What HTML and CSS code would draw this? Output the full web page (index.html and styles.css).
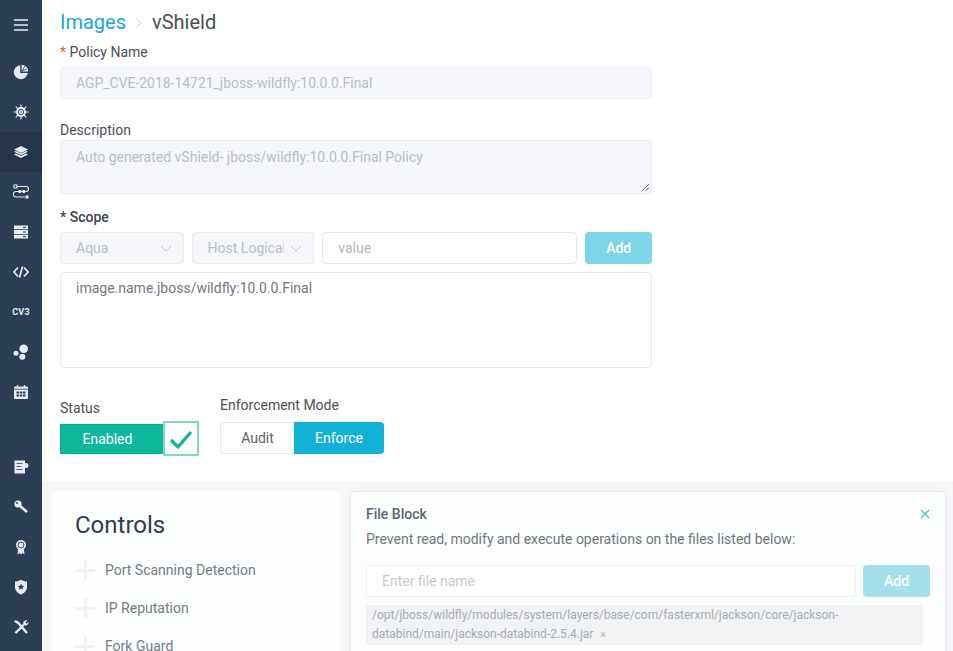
FILE: index.html
```html
<!DOCTYPE html>
<html lang="en">
<head>
<meta charset="utf-8">
<title>vShield</title>
<link rel="stylesheet" href="styles.css">
</head>
<body>
<div class="app">
  <nav class="sidebar">
    <div class="nav-item nav-menu"><svg viewBox="0 0 16 16" class="ico"><path d="M1 3h14M1 8h14M1 13h14" stroke="#e6ebf1" stroke-width="1.600" fill="none"/></svg></div>
    <div class="nav-item"><svg viewBox="0 0 16 16" class="ico"><path d="M7.200 1.200A7 7 0 1 0 14.800 9H7.200z" fill="#e6ebf1"/><path d="M8.600 0.800A6.600 6.600 0 0 1 15.200 7.400H8.600z" fill="#e6ebf1"/><path d="M9 7l3-5M9 7l5-2" stroke="#2c3e55" stroke-width=".8"/></svg></div>
    <div class="nav-item"><svg viewBox="0 0 16 16" class="ico"><path d="M8 .5v3M8 12.500v3M.5 8h3M12.500 8h3M2.700 2.700l2.200 2.200M11.100 11.100l2.200 2.200M2.700 13.300l2.200-2.200M11.100 4.900l2.200-2.200" stroke="#e6ebf1" stroke-width="1.200"/><circle cx="8" cy="8" r="5" fill="#e6ebf1"/><circle cx="8" cy="8" r="2.700" fill="none" stroke="#2c3e55" stroke-width=".9"/><circle cx="8" cy="8" r="1.200" fill="#8e9aa9"/></svg></div>
    <div class="nav-item active"><svg viewBox="0 0 16 16" class="ico"><path d="M8 2l7 3.500-7 3.500-7-3.500z" fill="#e6ebf1"/><path d="M1 7.800l2-.9 5 2.500 5-2.500 2 .9-7 3.500z" fill="#e6ebf1"/><path d="M1 10.500l2-.9 5 2.500 5-2.500 2 .9-7 3.500z" fill="#e6ebf1"/></svg></div>
    <div class="nav-item"><svg viewBox="0 0 16 16" class="ico"><path d="M3.500 2.500h9.500a2 2 0 0 1 0 5H3a2.500 2.500 0 0 0 0 5.500h9" stroke="#e6ebf1" stroke-width="1.200" fill="none"/><rect x="1" y="1" width="3" height="3" fill="none" stroke="#e6ebf1" stroke-width="1"/><rect x="5.500" y="6" width="2.500" height="3" fill="#e6ebf1"/><rect x="9.500" y="6" width="2.500" height="3" fill="#e6ebf1"/><rect x="12.500" y="11.500" width="3" height="3" fill="#e6ebf1"/></svg></div>
    <div class="nav-item"><svg viewBox="0 0 16 16" class="ico"><path d="M1 1.500h14v3.800H1zM1 6.100h14v3.800H1zM1 10.700h14v3.800H1z" fill="#e6ebf1"/><path d="M10 3.400h3M10 8h3M10 12.600h3" stroke="#2c3e55" stroke-width="1"/></svg></div>
    <div class="nav-item"><svg viewBox="0 0 16 16" class="ico"><path d="M5 3.500L1 8l4 4.500M11 3.500L15 8l-4 4.500M9.500 2.500l-3 11" stroke="#e6ebf1" stroke-width="1.700" fill="none"/></svg></div>
    <div class="nav-item"><span class="cv-label">CV3</span></div>
    <div class="nav-item"><svg viewBox="0 0 16 16" class="ico"><circle cx="10.700" cy="4.800" r="4.300" fill="#e6ebf1"/><circle cx="3" cy="9.200" r="2.500" fill="#e6ebf1"/><circle cx="9.300" cy="12.700" r="3" fill="#e6ebf1"/></svg></div>
    <div class="nav-item nav-last-top"><svg viewBox="0 0 16 16" class="ico"><rect x="1" y="2.500" width="14" height="12.500" rx="1" fill="#e6ebf1"/><path d="M4.500 1v3M11.500 1v3" stroke="#e6ebf1" stroke-width="1.200"/><path d="M1 5.200h14" stroke="#2c3e55" stroke-width=".8"/><path d="M3.500 7.500h2.500v2H3.500zM6.800 7.500h2.500v2H6.800zM10 7.500h2.500v2H10zM3.500 10.500h2.500v2H3.500zM6.800 10.500h2.500v2H6.800zM10 10.500h2.500v2H10z" fill="#2c3e55"/></svg></div>
    <div class="nav-item"><svg viewBox="0 0 16 16" class="ico"><path d="M1.500 1.500h10.500v13H1.500z" fill="#e6ebf1"/><path d="M3.500 4.500h6M3.500 7.500h5M3.500 10.500h6" stroke="#2c3e55" stroke-width=".8"/><circle cx="12.800" cy="6.500" r="2.600" fill="#e6ebf1"/></svg></div>
    <div class="nav-item"><svg viewBox="0 0 16 16" class="ico"><circle cx="5" cy="5" r="3.600" fill="#e6ebf1"/><circle cx="4" cy="4" r="1" fill="#2c3e55"/><path d="M6.500 6.500l7.500 6.500" stroke="#e6ebf1" stroke-width="2.600"/></svg></div>
    <div class="nav-item"><svg viewBox="0 0 16 16" class="ico"><path d="M5.200 9.500L4.500 15.500 6.500 14 8 15.500 9.500 14 11.500 15.500 10.800 9.500z" fill="#e6ebf1"/><circle cx="8" cy="6" r="5" fill="#e6ebf1"/><circle cx="8" cy="6" r="3" fill="none" stroke="#2c3e55" stroke-width=".9"/></svg></div>
    <div class="nav-item"><svg viewBox="0 0 16 16" class="ico"><path d="M2 2.500c2 0 4-.6 6-1.500 2 .9 4 1.500 6 1.500V8c0 3.500-2.500 6-6 7.500C4.500 14 2 11.500 2 8z" fill="#e6ebf1"/><path d="M8 4.500l1 2.200 2.300.2-1.700 1.600.5 2.300-2.100-1.200-2.100 1.200.5-2.300-1.700-1.600 2.300-.2z" fill="#2c3e55"/></svg></div>
    <div class="nav-item"><svg viewBox="0 0 16 16" class="ico"><path d="M2.500 14L11 5.500M4 2.500L14 14" stroke="#e6ebf1" stroke-width="2.400" fill="none"/><path d="M10 4.500c0-2 2-3.700 4.500-3.200L12.500 3.500l1 1.200 2-2c.4 2.500-1.500 4-3.500 3.800z" fill="#e6ebf1"/><path d="M1 2.500L3 1l2 2-1.500 1.500z" fill="#e6ebf1"/></svg></div>
  </nav>

  <main class="main">
    <div class="form">
      <h1 class="crumbs"><span class="crumb-link">Images</span><svg class="crumb-sep" viewBox="0 0 8 12"><path d="M1.500 1.500L6 6l-4.500 4.500" fill="none" stroke="#ced3d9" stroke-width="1"/></svg><span class="crumb-current">vShield</span></h1>

      <div class="label label-policy"><span class="req">*</span> Policy Name</div>
      <div class="field field-name disabled">AGP_CVE-2018-14721_jboss-wildfly:10.0.0.Final</div>

      <div class="label label-desc">Description</div>
      <div class="field field-desc disabled">Auto generated vShield- jboss/wildfly:10.0.0.Final Policy
        <svg class="resize" viewBox="0 0 10 10"><path d="M1 9l8-8M5 9l4-4" stroke="#55585d" stroke-width="1"/></svg>
      </div>

      <div class="label label-scope">* Scope</div>
      <div class="scope-row">
        <div class="select disabled sel-a"><span>Aqua</span><svg class="chev" viewBox="0 0 12 7"><path d="M1 1l5 5 5-5" fill="none" stroke="#c4cad2" stroke-width="1"/></svg></div>
        <div class="select disabled sel-b"><span class="clip">Host Logical</span><svg class="chev" viewBox="0 0 12 7"><path d="M1 1l5 5 5-5" fill="none" stroke="#c4cad2" stroke-width="1"/></svg></div>
        <div class="value-input">value</div>
        <div class="add-btn">Add</div>
      </div>
      <div class="scope-box">image.name.jboss/wildfly:10.0.0.Final</div>

      <div class="status-row">
        <div class="status-col">
          <div class="label label-status">Status</div>
          <div class="switch">
            <div class="switch-on">Enabled</div>
            <div class="switch-check"><svg viewBox="0 0 24 20"><path d="M2 11l7 7L22 3" fill="none" stroke="#12b59b" stroke-width="3.200"/></svg></div>
          </div>
        </div>
        <div class="mode-col">
          <div class="label label-mode">Enforcement Mode</div>
          <div class="segment">
            <div class="seg seg-off">Audit</div>
            <div class="seg seg-on">Enforce</div>
          </div>
        </div>
      </div>
    </div>

    <section class="lower">
      <div class="controls">
        <h2 class="controls-title">Controls</h2>
        <div class="control"><span class="plus"></span>Port Scanning Detection</div>
        <div class="control"><span class="plus"></span>IP Reputation</div>
        <div class="control"><span class="plus"></span>Fork Guard</div>
      </div>
      <div class="panel">
        <div class="panel-head">
          <div class="panel-title">File Block</div>
          <svg class="panel-close" viewBox="0 0 10 10"><path d="M1 1l8 8M9 1l-8 8" stroke="#5cc3dd" stroke-width="1.500"/></svg>
        </div>
        <div class="panel-desc">Prevent read, modify and execute operations on the files listed below:</div>
        <div class="panel-row">
          <div class="file-input">Enter file name</div>
          <div class="file-add">Add</div>
        </div>
        <div class="file-tag">
          <div>/opt/jboss/wildfly/modules/system/layers/base/com/fasterxml/jackson/core/jackson-</div>
          <div class="tag-line">databind/main/jackson-databind-2.5.4.jar<span class="tag-x">×</span></div>
        </div>
      </div>
    </section>
  </main>
</div>
</body>
</html>
```
FILE: styles.css
```css
* { box-sizing: border-box; }
html, body { margin: 0; height: 100%; }
body { font-family: Roboto, "Liberation Sans", sans-serif; color: #4a5360; background: #fff; overflow: hidden; }
.app { display: flex; height: 651px; overflow: hidden; }

.sidebar { width: 42px; flex: none; background: #2c3e55; padding-top: 5px; }
.nav-item { height: 40px; display: flex; align-items: center; justify-content: center; }
.nav-menu { height: 47px; padding-bottom: 7px; }
.nav-item.active { background: #25354a; }
.nav-last-top { margin-bottom: 35px; }
.ico { width: 16px; height: 16px; display: block; }
.cv-label { color: #e6ebf1; font-size: 9px; font-weight: 700; letter-spacing: .2px; }

.main { flex: 1; min-width: 0; }
.form { padding: 0 0 0 18px; width: 610px; }
.crumbs { margin: 0; height: 44px; display: flex; align-items: center; font-weight: 400; font-size: 20px; }
.crumb-link { color: #19a9d0; }
.crumb-sep { width: 8px; height: 12px; margin: 2px 9px 0 9px; }
.crumb-current { color: #4a4f57; }

.label { font-size: 14px; line-height: 16px; color: #4a4f57; }
.req { color: #f0502a; }
.label-policy { margin-top: 0; }
.field { border: 1px solid #e8ebef; border-radius: 4px; background: #f5f7fa; color: #b8bec6; font-size: 14px; padding: 0 15px; }
.field-name { margin-top: 7px; height: 32px; line-height: 30px; letter-spacing: -.04px; }
.label-desc { margin-top: 23px; }
.field-desc { margin-top: 2px; height: 54px; line-height: 30px; padding-top: 1px; position: relative; }
.resize { position: absolute; right: 1px; bottom: 1px; width: 9px; height: 9px; }
.label-scope { margin-top: 15px; font-weight: 500; color: #3b424d; }
.scope-row { display: flex; margin-top: 7px; height: 32px; }
.select { display: flex; align-items: center; border: 1px solid #e8ebef; border-radius: 4px; background: #f5f7fa; color: #b8bec6; font-size: 14px; padding: 0 11px 0 15px; height: 32px; justify-content: space-between; }
.sel-a { width: 124px; margin-right: 8px; }
.sel-b { width: 123px; margin-right: 8px; }
.clip { width: 76px; overflow: hidden; white-space: nowrap; }
.chev { width: 12px; height: 7px; }
.value-input { width: 256px; margin-right: 8px; border: 1px solid #e6e8eb; border-radius: 4px; color: #b0b6bd; font-size: 14px; line-height: 30px; padding: 0 15px; }
.add-btn { width: 67px; background: #7cd4e8; border-radius: 4px; color: #fff; font-size: 14px; font-weight: 500; line-height: 32px; text-align: center; }
.scope-box { margin-top: 8px; height: 96px; border: 1px solid #e8eaee; border-radius: 4px; font-size: 14px; color: #70767f; padding: 7px 15px; line-height: 16px; }

.status-row { display: flex; margin-top: 30px; }
.status-col { width: 160px; padding-top: 2px; }
.label-status { margin-top: 0; line-height: 16px; }
.switch { display: flex; align-items: center; margin-top: 5px; height: 35px; }
.switch-on { width: 104px; height: 30px; background: #0fb89c; color: #fff; font-size: 14px; line-height: 29px; text-align: center; border: 1px solid #0ba88e; padding-right: 9px; }
.switch-check { width: 36px; height: 35px; background: #fff; border: 2px solid #7dd8c8; display: flex; align-items: center; justify-content: center; margin-left: -1px; }
.switch-check svg { width: 24px; height: 20px; }
.label-mode { margin-top: -1px; }
.segment { display: flex; margin-top: 9px; height: 32px; }
.seg { font-size: 14px; line-height: 30px; text-align: center; }
.seg-off { width: 74px; border: 1px solid #e8eaee; border-right: 0; border-radius: 4px 0 0 4px; color: #5a6069; }
.seg-on { width: 90px; background: #12b1d5; color: #fff; line-height: 32px; border-radius: 0 4px 4px 0; }

.lower { margin-top: 26px; height: 190px; background: #f7f8fa; display: flex; padding: 9px 7px 0 10px; box-shadow: inset 0 6px 6px -4px #f1f3f5; }
.controls { width: 288px; margin-right: 10px; background: #fdfefe; padding: 19px 23px 0; flex: none; }
.controls-title { margin: 0 0 11px; font-size: 24px; font-weight: 400; color: #2f3b4c; line-height: 30px; }
.control { display: flex; align-items: center; height: 38px; font-size: 14px; color: #737a84; }
.plus { width: 20px; height: 20px; margin-right: 10px; background: linear-gradient(#f0f2f5, #f0f2f5) center / 20px 3px no-repeat, linear-gradient(#f0f2f5, #f0f2f5) center / 3px 20px no-repeat; }
.panel { flex: 1; border: 1px solid #e9ecef; border-radius: 4px 4px 0 0; background: #fcfdfd; padding: 14px 15px 0; min-width: 0; box-shadow: 0 0 6px #eef0f3; }
.panel-head { display: flex; justify-content: space-between; align-items: center; height: 16px; }
.panel-title { font-size: 14px; font-weight: 500; color: #5d6570; }
.panel-close { width: 10px; height: 10px; margin-right: 0; }
.panel-desc { margin-top: 8px; font-size: 14px; line-height: 18px; color: #6f7680; }
.panel-row { display: flex; margin-top: 17px; height: 32px; }
.file-input { width: 491px; margin-right: 7px; border: 1px solid #eef0f2; border-radius: 4px; background: #fff; color: #c4c9cf; font-size: 14px; line-height: 30px; padding: 0 15px; }
.file-add { width: 67px; background: #a4e0ec; border-radius: 4px; color: #fff; font-size: 14px; font-weight: 500; line-height: 32px; text-align: center; }
.file-tag { margin-top: 8px; width: 557px; height: 40px; background: #f1f2f4; border-radius: 3px; color: #a6abb2; font-size: 12px; line-height: 19px; padding: 1px 6px; }
.tag-x { margin-left: 7px; color: #b5b9bf; font-size: 11px; }
```
